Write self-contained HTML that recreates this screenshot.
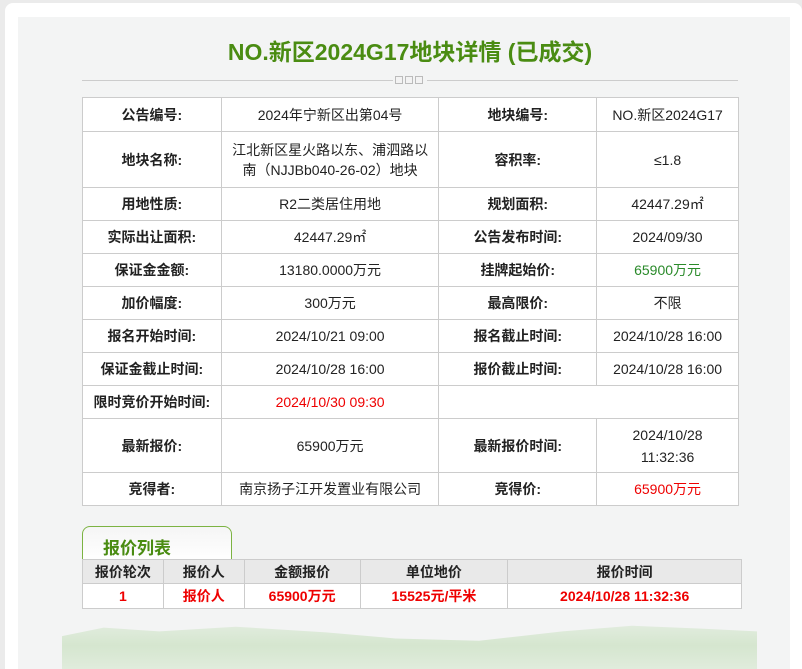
<!DOCTYPE html>
<html><head><meta charset="utf-8"><style>
html,body{margin:0;width:802px;height:669px;overflow:hidden;}
body{background:#ebebeb;font-family:"Liberation Sans","Noto Sans CJK SC",sans-serif;position:relative;}
.card{position:absolute;left:5px;top:3px;width:797px;height:666px;background:#fff;border-radius:8px 8px 0 0;}
.panel{position:absolute;left:18px;top:17px;width:772px;height:652px;background:#f3f4f4;}
.mt{position:absolute;left:62px;top:622px;width:695px;height:47px;background:linear-gradient(180deg,#e3ede0 0%,#d5e6cf 50%,#e0ecdc 100%);clip-path:polygon(0 30%,6% 12%,14% 20%,25% 10%,38% 22%,48% 35%,60% 40%,72% 20%,82% 8%,92% 14%,100% 20%,100% 100%,0 100%);}
h1{position:absolute;left:0;width:820px;top:33px;margin:0;text-align:center;font-size:23px;color:#4a8c12;font-weight:bold;}
.div{position:absolute;left:82px;top:80px;width:656px;height:1px;background:#ccc;}
.bx{position:absolute;top:76px;left:393px;height:8px;line-height:0;background:#f3f4f4;padding:0 2px;}
.bx i{display:inline-block;width:6px;height:6px;border:1px solid #bbb;background:#f3f3f3;margin-right:2px;}
table{border-collapse:collapse;position:absolute;background:#fff;}
td{border:1px solid #ccc;text-align:center;font-size:14px;color:#222;padding:0;}
.t1{left:82px;top:97px;width:657px;}
.t1 td.l{font-weight:bold;}
.red{color:#e00 !important;}
.grn{color:#2a8a2a;}
.tab{position:absolute;left:82px;top:526px;width:148px;height:34px;border:1px solid #7cb342;border-bottom:none;border-radius:8px 8px 0 0;background:linear-gradient(#f5f5f5,#fff);}
.tab span{position:absolute;left:20px;top:7px;font-size:17px;font-weight:bold;color:#4a8c12;}
.t2{left:82px;top:559px;width:660px;}
.t2 td{font-weight:bold;}
.t2 tr:first-child td{background:#e9e9e9;}
</style></head><body>
<div class="card"></div>
<div class="panel"></div>
<div class="mt"></div>
<h1>NO.新区2024G17地块详情 (已成交)</h1>
<div class="div"></div><div class="bx"><i></i><i></i><i></i></div>
<table class="t1">
<colgroup><col style="width:139px"><col style="width:218px"><col style="width:158px"><col style="width:142px"></colgroup>
<tr style="height:34px"><td class="l">公告编号:</td><td>2024年宁新区出第04号</td><td class="l">地块编号:</td><td>NO.新区2024G17</td></tr>
<tr style="height:56px"><td class="l">地块名称:</td><td style="line-height:20px">江北新区星火路以东、浦泗路以<br>南（NJJBb040-26-02）地块</td><td class="l">容积率:</td><td>≤1.8</td></tr>
<tr style="height:33px"><td class="l">用地性质:</td><td>R2二类居住用地</td><td class="l">规划面积:</td><td>42447.29㎡</td></tr>
<tr style="height:33px"><td class="l">实际出让面积:</td><td>42447.29㎡</td><td class="l">公告发布时间:</td><td>2024/09/30</td></tr>
<tr style="height:33px"><td class="l">保证金金额:</td><td>13180.0000万元</td><td class="l">挂牌起始价:</td><td class="grn">65900万元</td></tr>
<tr style="height:33px"><td class="l">加价幅度:</td><td>300万元</td><td class="l">最高限价:</td><td>不限</td></tr>
<tr style="height:33px"><td class="l">报名开始时间:</td><td>2024/10/21 09:00</td><td class="l">报名截止时间:</td><td>2024/10/28 16:00</td></tr>
<tr style="height:33px"><td class="l">保证金截止时间:</td><td>2024/10/28 16:00</td><td class="l">报价截止时间:</td><td>2024/10/28 16:00</td></tr>
<tr style="height:33px"><td class="l">限时竞价开始时间:</td><td class="red">2024/10/30 09:30</td><td colspan="2"></td></tr>
<tr style="height:54px"><td class="l">最新报价:</td><td>65900万元</td><td class="l">最新报价时间:</td><td style="line-height:22px">2024/10/28<br>11:32:36</td></tr>
<tr style="height:33px"><td class="l">竞得者:</td><td>南京扬子江开发置业有限公司</td><td class="l">竞得价:</td><td class="red">65900万元</td></tr>
</table>
<div class="tab"><span>报价列表</span></div>
<table class="t2">
<colgroup><col style="width:81px"><col style="width:81px"><col style="width:116px"><col style="width:148px"><col style="width:234px"></colgroup>
<tr style="height:24px"><td>报价轮次</td><td>报价人</td><td>金额报价</td><td>单位地价</td><td>报价时间</td></tr>
<tr style="height:25px"><td class="red">1</td><td class="red">报价人</td><td class="red">65900万元</td><td class="red">15525元/平米</td><td class="red">2024/10/28 11:32:36</td></tr>
</table>
</body></html>
